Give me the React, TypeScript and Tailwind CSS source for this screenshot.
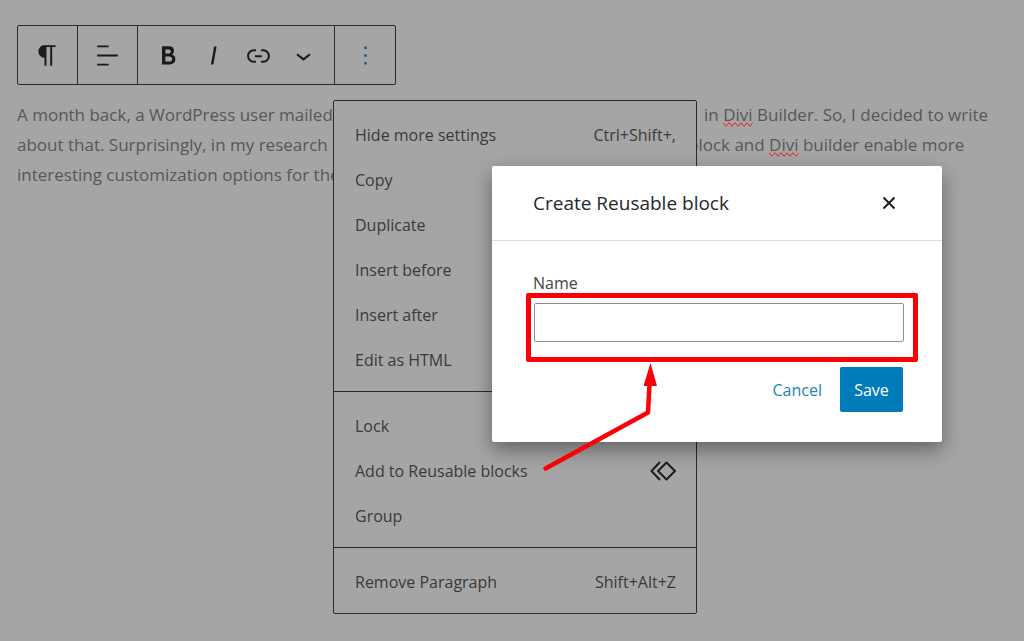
import { useState } from 'react';
import type { ReactNode } from 'react';

interface MenuItem {
  label: string;
  shortcut?: string;
  icon?: ReactNode;
}

const ICONS = {
  paragraph: 'M18.3 4H9.9v-.1l-.9.2c-2.3.4-4 2.4-4 4.8s1.7 4.4 4 4.8l.7.1V20h1.5V5.5h2.9V20h1.5V5.5h2.7V4z',
  align: 'M4 19.8h8.9v-1.5H4v1.5zm8.9-15.6H4v1.5h8.9V4.2zm-8.9 7v1.5h16v-1.5H4z',
  bold: 'M14.7 11.3c1-.6 1.5-1.6 1.5-3 0-2.3-1.3-3.4-4-3.4H7v14h5.8c1.4 0 2.5-.3 3.3-1 .8-.7 1.2-1.7 1.2-2.9.1-1.9-.8-3.1-2.6-3.7zm-5.1-4h2.3c.6 0 1.1.1 1.4.4.3.3.5.7.5 1.2s-.2 1-.5 1.2c-.3.3-.8.4-1.4.4H9.6V7.3zm4.6 9c-.4.3-1 .4-1.7.4H9.6v-3.9h2.9c.7 0 1.3.2 1.7.5.4.3.6.8.6 1.5s-.2 1.2-.6 1.5z',
  italic: 'M12.5 5L10 19h1.9l2.5-14z',
  link: 'M15.6 7.2H14v1.5h1.6c2 0 3.7 1.7 3.7 3.7s-1.7 3.7-3.7 3.7H14v1.5h1.6c2.8 0 5.2-2.3 5.2-5.2 0-2.9-2.3-5.2-5.2-5.2zM4.7 12.4c0-2 1.7-3.7 3.7-3.7H10V7.2H8.4c-2.9 0-5.2 2.3-5.2 5.2 0 2.9 2.3 5.2 5.2 5.2H10v-1.5H8.4c-2 0-3.7-1.7-3.7-3.7zm4.6.9h5.3v-1.5H9.3v1.5z',
  chevron: 'M17.5 11.6L12 16l-5.5-4.4.9-1.2L12 14l4.5-3.6 1 1.2z',
  more: 'M13 19h-2v-2h2v2zm0-6h-2v-2h2v2zm0-6h-2V5h2v2z',
};

const ReusableIcon = () => (
  <svg viewBox="0 0 26 20" className="w-[26px] h-5" fill="none" stroke="#1e1e1e" strokeWidth="2" strokeLinejoin="round">
    <path d="M16.5 1.5 25 10 16.5 18.5 8 10z" />
    <path d="M10 1 1.5 10l8.5 9" />
  </svg>
);

const menuGroups: MenuItem[][] = [
  [
    { label: 'Hide more settings', shortcut: 'Ctrl+Shift+,' },
    { label: 'Copy' },
    { label: 'Duplicate' },
    { label: 'Insert before' },
    { label: 'Insert after' },
    { label: 'Edit as HTML' },
  ],
  [
    { label: 'Lock' },
    { label: 'Add to Reusable blocks', icon: <ReusableIcon /> },
    { label: 'Group' },
  ],
  [{ label: 'Remove Paragraph', shortcut: 'Shift+Alt+Z' }],
];

const ToolButton = ({ label, path, wide }: { label: string; path: string; wide?: boolean }) => (
  <button
    type="button"
    aria-label={label}
    className={`flex h-full items-center justify-center ${wide ? 'w-[60px]' : 'w-[45px]'}`}
  >
    <svg viewBox="0 0 24 24" className="w-[31px] h-[31px]" fill="currentColor">
      <path d={path} />
    </svg>
  </button>
);

const BlockMenu = () => (
  <div className="absolute top-[74px] -left-[2px] z-10 w-[364px] rounded-xs border border-[#2a2a2a] bg-[#a5a5a5] text-base text-[#3a3a3a]">
    {menuGroups.map((group, i) => (
      <div key={i} className="border-b border-[#2a2a2a] pt-[11px] pb-[9px] last:border-b-0">
        {group.map((item) => (
          <button key={item.label} type="button" className="flex h-[45px] w-full items-center justify-between pr-5 pl-[21px]">
            <span>{item.label}</span>
            {item.shortcut && <span>{item.shortcut}</span>}
            {item.icon}
          </button>
        ))}
      </div>
    ))}
  </div>
);

const Toolbar = () => (
  <div className="flex h-[60px] w-fit divide-x divide-[#2a2a2a] rounded-xs border border-[#2a2a2a] text-[#1a1a1a]">
    <ToolButton label="Paragraph" path={ICONS.paragraph} wide />
    <ToolButton label="Align text" path={ICONS.align} wide />
    <div className="flex px-2">
      <ToolButton label="Bold" path={ICONS.bold} />
      <ToolButton label="Italic" path={ICONS.italic} />
      <ToolButton label="Link" path={ICONS.link} />
      <ToolButton label="More formatting" path={ICONS.chevron} />
    </div>
    <div className="relative">
      <div className="h-full text-[#1d5c8c]">
        <ToolButton label="Options" path={ICONS.more} wide />
      </div>
      <BlockMenu />
    </div>
  </div>
);

const Misspelled = ({ children }: { children: string }) => (
  <span className="[text-decoration-line:spelling-error]">{children}</span>
);

const ReusableDialog = () => {
  const [name, setName] = useState('');

  return (
    <form
      role="dialog"
      aria-labelledby="dialog-title"
      onSubmit={(e) => e.preventDefault()}
      className="absolute top-[166px] right-[82px] z-20 w-[450px] rounded-xs bg-white pb-[30px] shadow-[0_8px_20px_rgba(0,0,0,0.4)]"
    >
      <div className="flex h-[75px] items-center justify-between border-b border-[#dddddd] pr-[46px] pl-[41px]">
        <h2 id="dialog-title" className="text-[19px] font-medium text-[#23282d]">Create Reusable block</h2>
        <button type="button" aria-label="Close">
          <svg viewBox="0 0 14 14" className="w-3.5 h-3.5" stroke="#1e1e1e" strokeWidth="2">
            <path d="M1.5 1.5 12.5 12.5M12.5 1.5 1.5 12.5" />
          </svg>
        </button>
      </div>
      <div className="pt-[30px] pr-[39px] pl-[41px]">
        <label htmlFor="block-name" className="block text-base text-[#444444]">Name</label>
        <div className="-mt-0.5 -mr-[15px] -ml-[7px] rounded-xs border-[5px] border-[#fb0007] pt-[5px] pr-[9px] pb-[15px] pl-[3px]">
          <input
            id="block-name"
            type="text"
            value={name}
            onChange={(e) => setName(e.target.value)}
            className="block h-[39px] w-full rounded-xs border border-[#8d8f94] px-2 text-base outline-none"
          />
        </div>
        <div className="mt-[5px] flex items-center justify-end gap-[18px]">
          <button type="button" className="text-base text-[#2382b5]">Cancel</button>
          <button type="submit" className="h-[45px] w-[63px] rounded-xs bg-[#007cba] text-base text-white">Save</button>
        </div>
      </div>
      {/* arrow from the menu entry up to the name field */}
      <svg viewBox="0 0 120 110" className="pointer-events-none absolute top-[196px] left-[48px] w-[120px] h-[110px]">
        <path d="M5.5 106.5 108 50.5 109.5 22" fill="none" stroke="#fb0007" strokeWidth="4.5" strokeLinecap="round" strokeLinejoin="round" />
        <path d="M110.5 1 103.5 24h13.5z" fill="#fb0007" />
      </svg>
    </form>
  );
};

export default function App() {
  return (
    <main className="relative min-h-screen bg-[#a5a5a5] px-[17px] pt-[25px] font-['Open_Sans','Noto_Sans',sans-serif]">
      <Toolbar />
      <div className="mt-[15px] text-[17px] leading-[30px] whitespace-nowrap text-[#575757]">
        <p className="flex">
          <span className="w-[687px] shrink-0">A month back, a WordPress user mailed</span>
          <span>in <Misspelled>Divi</Misspelled> Builder. So, I decided to write</span>
        </p>
        <p className="flex">
          <span className="w-[671px] shrink-0">about that. Surprisingly, in my research</span>
          <span>block and <Misspelled>Divi</Misspelled> builder enable more</span>
        </p>
        <p>interesting customization options for the</p>
      </div>
      <ReusableDialog />
    </main>
  );
}
